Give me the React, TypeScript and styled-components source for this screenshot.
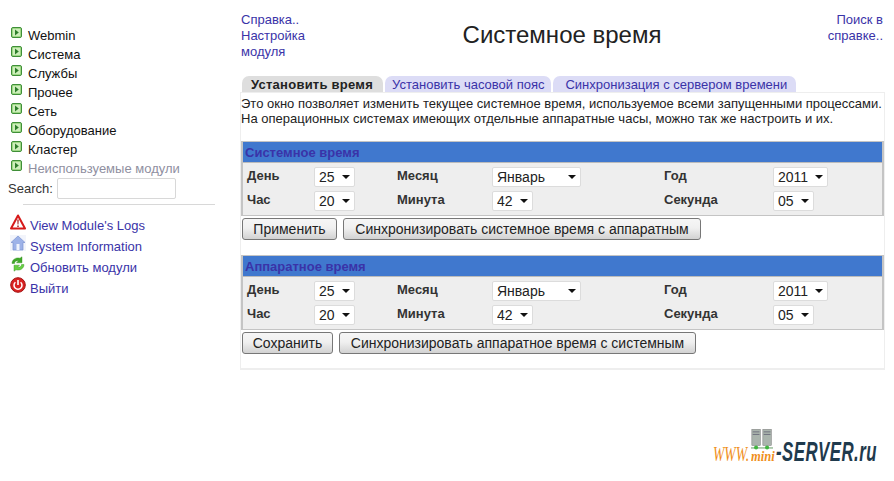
import React from "react";
import styled, { createGlobalStyle } from "styled-components";

const Global = createGlobalStyle`
  html, body { margin: 0; padding: 0; background: #fff; }
  body { font-family: "Liberation Sans", Arial, sans-serif; font-size: 13px; color: #222; }
`;
const Page = styled.div`
  width: 894px; height: 481px; display: flex; flex-direction: column; overflow: hidden;
`;
const Top = styled.div`display: flex; height: 425px;`;
const Sidebar = styled.nav`width: 240px; flex: none; padding: 26px 0 0 8px; box-sizing: border-box;`;
const CatList = styled.div`display: flex; flex-direction: column;`;
const Cat = styled.div<{ $muted?: boolean }>`
  height: 19px; display: flex; align-items: flex-start; gap: 6px; padding-left: 3px;
  line-height: 20px; color: ${p => (p.$muted ? "#8f8f9f" : "#111")};
  svg { margin-top: 1px; flex: none; }
`;
const SearchRow = styled.div`display: flex; align-items: center; gap: 4px; height: 22px; margin-top: -1px; color: #333;`;
const SearchInput = styled.input`
  width: 119px; height: 21px; box-sizing: border-box; padding: 0;
  border: 1px solid #d8d8d8; border-radius: 2px; background: #fff;
`;
const Divider = styled.hr`
  width: 192px; height: 1px; margin: 5px 0 0 15px; border: 0; background: #d8d8d8;
`;
const Links = styled.div`display: flex; flex-direction: column; margin-top: 10px;`;
const SideLink = styled.div`
  height: 21px; display: flex; align-items: center; gap: 4px; padding-left: 2px; color: #3a33a8; line-height: 21px;
  svg { flex: none; margin-top: -8px; }
`;
const Main = styled.main`flex: 1; min-width: 0; padding: 12px 9px 0 0; box-sizing: border-box;`;
const Header = styled.header`display: flex; align-items: flex-start; height: 64px; padding: 0 2px 0 1px;`;
const HelpLeft = styled.div`width: 110px; color: #3a33a8; line-height: 16px; flex: none;`;
const Title = styled.h1`
  flex: 1; margin: 9px 0 0; font-size: 24px; font-weight: 400; line-height: 28px; color: #222; text-align: center; padding-right: 50px;
`;
const HelpRight = styled.div`width: 60px; color: #3a33a8; line-height: 16px; text-align: right; flex: none;`;
const Tabs = styled.div`display: flex; gap: 2px; height: 16px; padding-left: 2px;`;
const Tab = styled.div<{ $active?: boolean; $l: number; $r: number }>`
  height: 16px; box-sizing: border-box; padding: 0 ${p => p.$r}px 0 ${p => p.$l}px;
  border-radius: 7px 7px 0 0; line-height: 17px; white-space: nowrap;
  background: ${p => (p.$active ? "#dedede" : "#dcdcf6")};
  color: ${p => (p.$active ? "#222" : "#3a33a8")};
  font-weight: ${p => (p.$active ? 700 : 400)};
  letter-spacing: ${p => (p.$active ? ".25px" : "0")};
`;
const Panel = styled.section`
  height: 278px; box-sizing: border-box; border: 1px solid #eee; border-width: 1px 1px 2px 1px; padding: 3px 0 0 0;
`;
const Intro = styled.p`margin: 0; line-height: 15px; color: #222; white-space: nowrap;`;
const Section = styled.div`border: 2px solid #c4c4c4; border-width: 1px 2px 1px 2px; background: #eee;`;
const Spacer = styled.div<{ $h: number }>`height: ${p => p.$h}px;`;
const SectionTitle = styled.div`
  height: 20px; line-height: 21px; background: #4078ce; color: #3a33a8; font-weight: 700; font-size: 13px; padding-left: 2px;
  border-bottom: 1px solid #bbb;
`;
const Grid = styled.div`
  display: grid; grid-template-columns: 67px 83px 95px 172px 109px 1fr; grid-auto-rows: 24px; padding: 2px 0 2px 4px;
`;
const Label = styled.div`font-weight: 700; line-height: 20px; color: #333; margin-top: 1px;`;
const SelWrap = styled.div<{ $w: number }>`
  position: relative; width: ${p => p.$w}px; height: 20px; margin-top: 2px;
  &::after {
    content: ""; position: absolute; right: 5px; top: 8px; pointer-events: none;
    border-left: 4px solid transparent; border-right: 4px solid transparent; border-top: 4px solid #111;
  }
`;
const Sel = styled.select`
  appearance: none; width: 100%; height: 100%; box-sizing: border-box; margin: 0; padding: 0 0 0 4px;
  font: 14px "Liberation Sans", Arial, sans-serif; color: #222; background: #fff;
  border: 1px solid #dcdcdc; border-radius: 2px;
`;
const Buttons = styled.div`display: flex; gap: 6px; margin: 2px 0 0 1px;`;
const Btn = styled.button<{ $w: number }>`
  width: ${p => p.$w}px; height: 22px; box-sizing: border-box; padding: 0; margin: 0;
  font: 14px "Liberation Sans", Arial, sans-serif; color: #222; white-space: nowrap;
  border: 1px solid #777; border-radius: 3px;
  background: linear-gradient(#f6f6f6, #f0f0f0 45%, #d2d2d2);
`;
const Footer = styled.footer`
  display: flex; justify-content: flex-end; align-items: flex-start; height: 56px; padding: 4px 15px 0 0; box-sizing: border-box;
`;
const Logo = styled.div`display: flex; align-items: baseline; white-space: nowrap; position: relative; height: 38px; padding-top: 9px; box-sizing: border-box;`;
const Www = styled.span`font-family: "Liberation Serif", serif; font-style: italic; color: #f08f1c; font-size: 22px; display: inline-block; transform: scaleX(.62); transform-origin: left; width: 38px;`;
const Mini = styled.span`font-family: "Liberation Serif", serif; font-style: italic; font-weight: 700; color: #f08f1c; font-size: 14px; display: inline-block; width: 25px; transform: scaleX(.9); transform-origin: left;`;
const ServerText = styled.span`font-family: "Liberation Sans", sans-serif; font-style: italic; font-weight: 700; color: #1f3a4d; font-size: 28px; line-height: 28px; display: inline-block; transform: scaleX(.6); transform-origin: left; width: 103px; letter-spacing: .8px;`;
const LogoIcon = styled.svg`position: absolute; left: 38px; top: 0;`;

const Arrow = () => (
  <svg width="11" height="11" viewBox="0 0 11 11">
    <rect x=".5" y=".5" width="10" height="10" rx="1.5" fill="#9fd886" stroke="#3f8f38" />
    <rect x="2" y="2" width="7" height="7" fill="#cdeebb" />
    <path d="M4 2.600 7.800 5.500 4 8.400z" fill="#2d7d2a" />
  </svg>
);
const Warn = () => (
  <svg width="16" height="16" viewBox="0 0 16 16">
    <path d="M8 1.500 15 14.500H1z" fill="#fff" stroke="#d61a1a" strokeWidth="2" strokeLinejoin="round" />
    <path d="M7.200 5.500h1.600l-.3 5h-1zM7.200 11.500h1.600v1.500H7.200z" fill="#a33" />
  </svg>
);
const House = () => (
  <svg width="16" height="16" viewBox="0 0 16 16">
    <rect x="0" y="0" width="16" height="16" fill="#f2f4fb" />
    <path d="M8 1 15 7.500 13 7.500V15H3V7.500H1z" fill="#9db2e8" stroke="#7d93d0" strokeWidth=".7" />
    <rect x="6.500" y="9" width="3" height="6" fill="#eef2fc" />
  </svg>
);
const Refresh = () => (
  <svg width="16" height="16" viewBox="0 0 16 16">
    <path d="M2 7.500C2 3.500 6 1 10 2.200L12 .8v6H6.500l2-2C6 4.500 4.500 5.800 4.500 7.500z" fill="#3fa828" stroke="#2f8a1c" strokeWidth=".4" />
    <path d="M14 8.500c0 4-4 6.500-8 5.300L4 15.200v-6h5.500l-2 2c2.500.3 4-1 4-2.700z" fill="#67d043" stroke="#2f8a1c" strokeWidth=".4" />
  </svg>
);
const Power = () => (
  <svg width="16" height="16" viewBox="0 0 16 16">
    <circle cx="8" cy="8" r="7.300" fill="#d92222" stroke="#a31212" />
    <path d="M5.400 5.200a4 4 0 1 0 5.200 0" fill="none" stroke="#fff" strokeWidth="1.500" />
    <path d="M8 3v5" stroke="#fff" strokeWidth="1.600" />
  </svg>
);

const Select = ({ w, v }: { w: number; v: string }) => (
  <SelWrap $w={w}>
    <Sel defaultValue={v}><option>{v}</option></Sel>
  </SelWrap>
);

const TimeSection = ({ title }: { title: string }) => (
  <Section>
    <SectionTitle>{title}</SectionTitle>
    <Grid>
      <Label>День</Label><Select w={41} v="25" />
      <Label>Месяц</Label><Select w={89} v="Январь" />
      <Label>Год</Label><Select w={55} v="2011" />
      <Label>Час</Label><Select w={41} v="20" />
      <Label>Минута</Label><Select w={41} v="42" />
      <Label>Секунда</Label><Select w={41} v="05" />
    </Grid>
  </Section>
);

const cats = ["Webmin", "Система", "Службы", "Прочее", "Сеть", "Оборудование", "Кластер"];

export default function App() {
  return (
    <Page>
      <Global />
      <Top>
        <Sidebar>
          <CatList>
            {cats.map(c => <Cat key={c}><Arrow />{c}</Cat>)}
            <Cat $muted><Arrow />Неиспользуемые модули</Cat>
          </CatList>
          <SearchRow>Search:<SearchInput /></SearchRow>
          <Divider />
          <Links>
            <SideLink><Warn />View Module's Logs</SideLink>
            <SideLink><House />System Information</SideLink>
            <SideLink><Refresh />Обновить модули</SideLink>
            <SideLink><Power />Выйти</SideLink>
          </Links>
        </Sidebar>
        <Main>
          <Header>
            <HelpLeft>Справка..<br />Настройка<br />модуля</HelpLeft>
            <Title>Системное время</Title>
            <HelpRight>Поиск в<br />справке..</HelpRight>
          </Header>
          <Tabs>
            <Tab $active $l={9} $r={10}>Установить время</Tab>
            <Tab $l={7} $r={7}>Установить часовой пояс</Tab>
            <Tab $l={12} $r={9}>Синхронизация с сервером времени</Tab>
          </Tabs>
          <Panel>
            <Intro>
              Это окно позволяет изменить текущее системное время, используемое всеми запущенными процессами.<br />
              На операционных системах имеющих отдельные аппаратные часы, можно так же настроить и их.
            </Intro>
            <Spacer $h={15} />
            <TimeSection title="Системное время" />
            <Buttons>
              <Btn $w={95}>Применить</Btn>
              <Btn $w={358}>Синхронизировать системное время с аппаратным</Btn>
            </Buttons>
            <Spacer $h={15} />
            <TimeSection title="Аппаратное время" />
            <Buttons>
              <Btn $w={91}>Сохранить</Btn>
              <Btn $w={357}>Синхронизировать аппаратное время с системным</Btn>
            </Buttons>
          </Panel>
        </Main>
      </Top>
      <Footer>
        <Logo>
          <LogoIcon width="22" height="21" viewBox="0 0 26 24">
            <rect x="1" y="0" width="10" height="19" fill="#aab4ad" stroke="#777" strokeWidth=".6" />
            <rect x="14" y="0" width="10" height="19" fill="#aab4ad" stroke="#777" strokeWidth=".6" />
            <path d="M2 3h8M2 6h8M15 3h8M15 6h8" stroke="#667" strokeWidth="1" />
            <path d="M0 22h26" stroke="#4a8a4a" strokeWidth="1" />
            <circle cx="6" cy="21.500" r="2.400" fill="#3fb53f" />
            <circle cx="19" cy="21.500" r="2.400" fill="#3fb53f" />
          </LogoIcon>
          <Www>WWW.</Www><Mini>mini</Mini><ServerText>-SERVER.ru</ServerText>
        </Logo>
      </Footer>
    </Page>
  );
}
